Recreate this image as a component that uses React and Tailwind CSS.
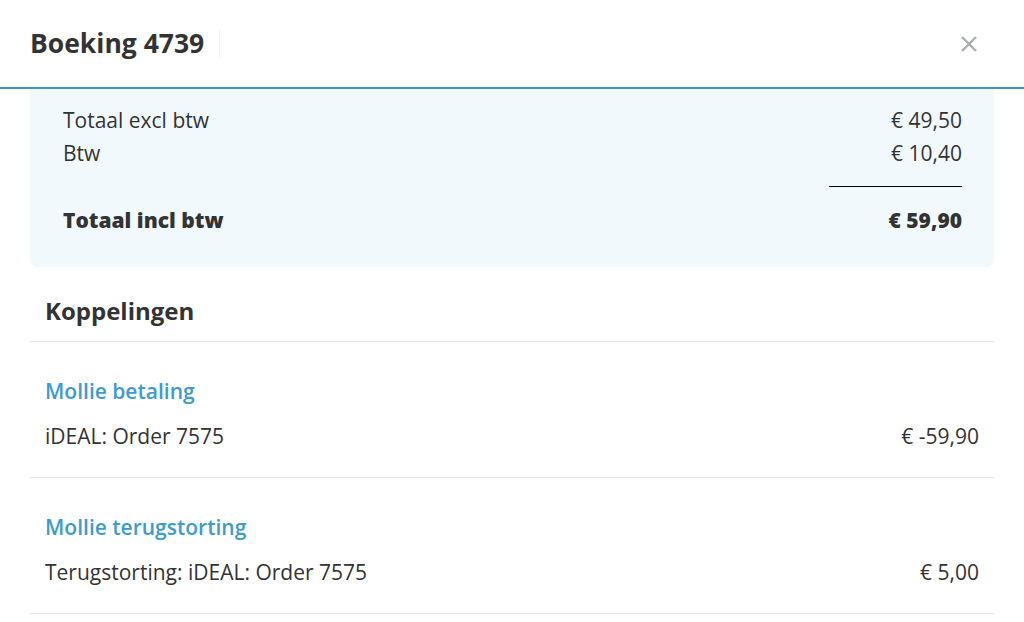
import React from 'react';

const totals = [
  { label: 'Totaal excl btw', amount: '€ 49,50' },
  { label: 'Btw', amount: '€ 10,40' },
];

const links = [
  { title: 'Mollie betaling', description: 'iDEAL: Order 7575', amount: '€ -59,90' },
  { title: 'Mollie terugstorting', description: 'Terugstorting: iDEAL: Order 7575', amount: '€ 5,00' },
];

const App = () => {
  return (
    <div
      className="w-[1024px] h-[622px] overflow-hidden bg-white text-[#333]"
      style={{ fontFamily: '"Open Sans", "Noto Sans", sans-serif' }}
    >
      {/* Header */}
      <div className="h-[87px] flex items-center justify-between pl-[30px] pr-[46px]">
        <div className="flex items-center">
          <h1 className="text-[26.5px] font-bold leading-none text-[#333]">Boeking 4739</h1>
          <span className="ml-[15px] w-px h-[27px] bg-[#efefef]"></span>
        </div>
        <button className="text-[#a8aeb0]" aria-label="Sluiten">
          <svg width="18" height="18" viewBox="0 0 18 18" fill="none" stroke="currentColor" strokeWidth="2.4">
            <path d="M2 2l14 14M16 2L2 16" />
          </svg>
        </button>
      </div>
      <div className="h-[2px] bg-[#3a96c8]"></div>

      <div className="px-[30px]">
        {/* Totals panel */}
        <div className="bg-[#f2f9fd] rounded-b-lg pl-[33px] pr-[32px] pt-[15px] pb-[30px] text-[21px]">
          {totals.map((row) => (
            <div key={row.label} className="flex justify-between leading-[33px]">
              <span>{row.label}</span>
              <span>{row.amount}</span>
            </div>
          ))}
          <div className="flex justify-end mt-[16px] mb-[17px]">
            <div className="w-[133px] h-px bg-black"></div>
          </div>
          <div className="flex justify-between leading-[33px] font-extrabold">
            <span>Totaal incl btw</span>
            <span>€ 59,90</span>
          </div>
        </div>

        {/* Koppelingen */}
        <h2 className="pl-[15px] pt-[29px] pb-[15px] text-[24px] font-bold leading-[30px] border-b border-[#e3e3e3]">
          Koppelingen
        </h2>
        {links.map((link) => (
          <div key={link.title} className="pl-[15px] pr-[15px] pt-[34px] pb-[26px] border-b border-[#e3e3e3]">
            <div className="text-[21px] font-semibold leading-[30px] text-[#3d9bd0]">{link.title}</div>
            <div className="flex justify-between mt-[15px] text-[21px] leading-[30px]">
              <span>{link.description}</span>
              <span>{link.amount}</span>
            </div>
          </div>
        ))}
      </div>
    </div>
  );
};

export default App;
